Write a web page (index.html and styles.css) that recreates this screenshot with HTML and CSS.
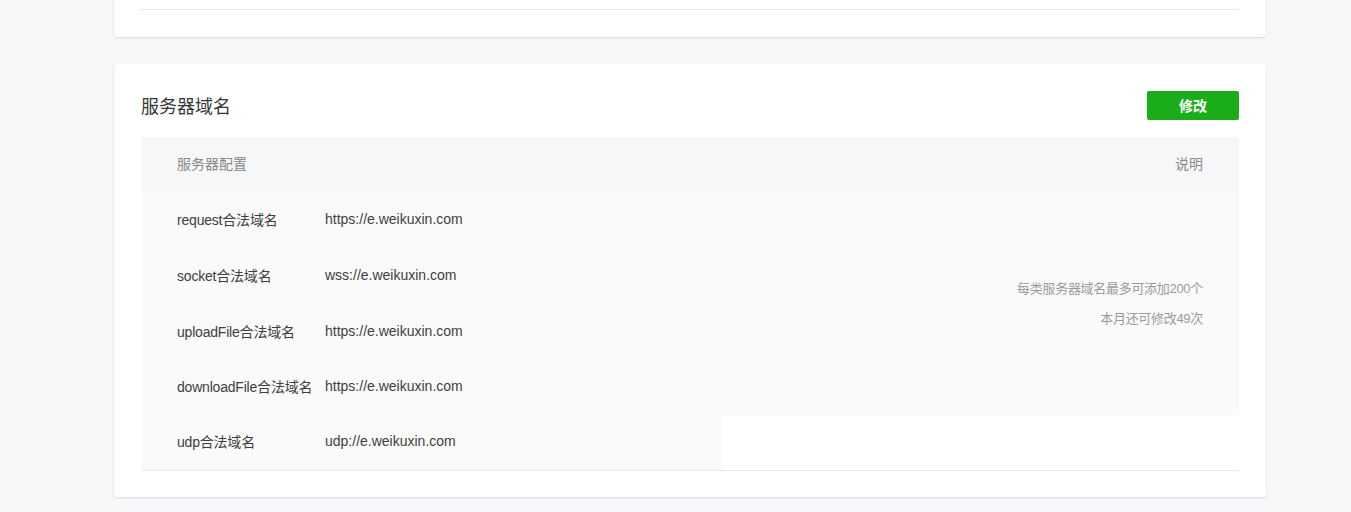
FILE: index.html
```html
<!DOCTYPE html>
<html lang="zh-CN">
<head>
<meta charset="utf-8">
<title>服务器域名</title>
<link rel="stylesheet" href="styles.css">
</head>
<body>
<div class="page">
  <section class="card card-top">
    <div class="top-rest"></div>
  </section>
  <section class="card">
    <div class="card-head">
      <h2 class="card-title">服务器域名</h2>
      <button class="btn-primary" type="button">修改</button>
    </div>
    <div class="domain-table">
      <div class="th th-config">服务器配置</div>
      <div class="th th-note">说明</div>

      <div class="td td-label">request合法域名</div>
      <div class="td td-value">https://e.weikuxin.com</div>
      <div class="td td-note">
        <p>每类服务器域名最多可添加200个</p>
        <p>本月还可修改49次</p>
      </div>

      <div class="td td-label">socket合法域名</div>
      <div class="td td-value">wss://e.weikuxin.com</div>

      <div class="td td-label">uploadFile合法域名</div>
      <div class="td td-value">https://e.weikuxin.com</div>

      <div class="td td-label">downloadFile合法域名</div>
      <div class="td td-value">https://e.weikuxin.com</div>

      <div class="td td-label last">udp合法域名</div>
      <div class="td td-value last">udp://e.weikuxin.com</div>
      <div class="td td-empty last"></div>
    </div>
  </section>
</div>
</body>
</html>
```

FILE: styles.css
```css
* {
  box-sizing: border-box;
}

html, body {
  margin: 0;
  padding: 0;
}

body {
  background: #f6f7f9;
  font-family: "Liberation Sans", "Noto Sans CJK SC", sans-serif;
  color: #353535;
  overflow: hidden;
}

.page {
  width: 1152px;
  margin-left: 114px;
  margin-top: -40px;
}

.card {
  background: #ffffff;
  border-radius: 4px;
  box-shadow: 0 1px 2px rgba(140, 140, 150, 0.25);
  padding: 27px 27px 26px;
  margin-bottom: 27px;
}

.card-top {
  padding-top: 0;
  padding-bottom: 27px;
}

.top-rest {
  height: 50px;
  border-bottom: 1px solid #e7e7eb;
}

.card-head {
  display: flex;
  align-items: center;
  justify-content: space-between;
  height: 29px;
  margin-bottom: 17px;
}

.card-title {
  margin: 0 0 2px;
  font-size: 18px;
  font-weight: normal;
  color: #353535;
}

.btn-primary {
  width: 92px;
  height: 29px;
  border: none;
  border-radius: 2px;
  background: #1aad19;
  color: #ffffff;
  font-family: inherit;
  font-size: 14px;
  font-weight: 600;
  padding: 0 0 2px;
}

.domain-table {
  display: grid;
  grid-template-columns: 184px 398px 1fr;
  grid-template-rows: 55px 56px 56px 56px 55px 55px;
  border-bottom: 1px solid #e7e7eb;
  font-size: 14px;
}

.th {
  background: #f6f7f9;
  color: #888888;
  display: flex;
  align-items: center;
  padding-bottom: 4px;
}

.th-config {
  grid-column: 1 / 3;
  padding-left: 36px;
}

.th-note {
  justify-content: flex-end;
  padding-right: 36px;
}

.td {
  background: #fafafa;
  display: flex;
  align-items: center;
  color: #3e3e3e;
  padding-bottom: 3px;
}

.td-label {
  padding-left: 36px;
  white-space: nowrap;
  letter-spacing: -0.2px;
}

.td-note {
  grid-column: 3;
  grid-row: 2 / 6;
  flex-direction: column;
  align-items: flex-end;
  justify-content: center;
  padding-right: 36px;
  padding-bottom: 0;
  font-size: 13px;
  color: #9a9a9a;
}

.td-note p {
  margin: 0;
  line-height: 30px;
  letter-spacing: -0.3px;
}

.td-empty {
  background: #ffffff;
}
```
